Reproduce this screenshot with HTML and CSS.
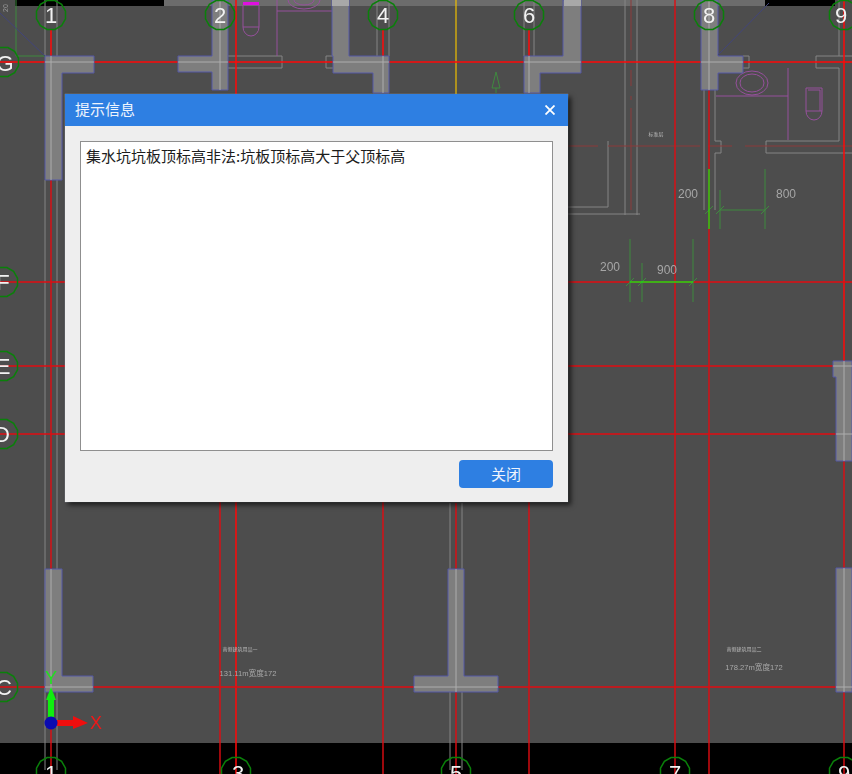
FILE: index.html
```html
<!DOCTYPE html>
<html lang="zh-CN">
<head>
<meta charset="utf-8">
<title>提示信息</title>
<link rel="stylesheet" href="styles.css">
</head>
<body>
<main class="stage">
  <svg class="canvas" width="852" height="774" viewBox="0 0 852 774" xmlns="http://www.w3.org/2000/svg">
    <defs>
      <polygon id="bubble" points="14.5,3.9 10.6,10.6 3.9,14.5 -3.9,14.5 -10.6,10.6 -14.5,3.9 -14.5,-3.9 -10.6,-10.6 -3.9,-14.5 3.9,-14.5 10.6,-10.6 14.5,-3.9"/>
    </defs>
    <rect class="bg" width="852" height="774"/>
    <rect class="black" x="0" y="743" width="852" height="31"/>
    <rect class="strip" x="164" y="0" width="601" height="6"/>
    <rect class="black" x="15" y="0" width="149" height="6"/>
    <rect class="black" x="765" y="0" width="70" height="6"/>

    <!-- thin building outlines -->
    <g class="outline">
      <path d="M45 0V56M57 0V56M45 180V770M57 180V770"/>
      <path d="M377 0V56M389 0V56M524 0V56M534 0V56"/>
      <path d="M625 0V215M637 0V215"/>
      <path d="M704 90V210M715 90V141H721V153H715V210"/>
      <path d="M839 0V56M839 68V141H766V153H852"/>
      <path d="M852 56H816V68H839"/>
      <path d="M450 503V770M462 503V770"/>
      <path d="M228 56H282V68H228"/>
      <path d="M333 56H326V68H333"/>
      <path d="M743 56H749V68H743"/>
      <path d="M568 214H640M568 207H608V141"/>
    </g>

    <!-- sanitary fittings -->
    <g class="fixture">
      <path d="M277 0V56M277 11H332"/>
      <path d="M243 5H259V27A8 9 0 0 1 243 27ZM243 27H259"/>
      <path d="M288 0A16 9 0 0 0 320 0"/>
      <path d="M294 0A10 5 0 0 0 314 0"/>
      <ellipse cx="752" cy="83" rx="16" ry="12"/>
      <ellipse cx="752" cy="83" rx="12" ry="9"/>
      <path d="M716 96H788M788 68V140"/>
      <path d="M806 88H822V111A8 9 0 0 1 806 111ZM806 111H822M808 90H820V111"/>
    </g>
    <rect class="fixture-bright" x="243" y="2" width="16" height="3"/>

    <!-- dashed centre lines -->
    <g class="dashed">
      <path d="M568 146H598M608 146H700M708 146H732M745 146H852"/>
      <path d="M631 0V50M631 70V86M631 96V100M631 108V210"/>
    </g>

    <!-- axis lines -->
    <path class="axis-yellow" d="M456 0V94"/>
    <g class="axis-bright">
      <path d="M0 62H852"/>
      <path d="M236 0V94M236 502V774"/>
      <path d="M220 30V56M51 30V56"/>
      <path d="M383 30V56M529 30V56"/>
      <path d="M844 0V361"/>
    </g>
    <g class="axis">
      <path d="M51 180V774M220 502V774M383 502V774M456 503V774M529 502V774"/>
      <path d="M675 0V774M709 90V774M844 461V568M844 692V774"/>
      <path d="M0 282H66M568 282H852M0 366H66M568 366H852M0 434H66M568 434H852M0 687H852"/>
    </g>

    <!-- walls -->
    <g class="wall">
      <path d="M45 56H94V73H62V180H45Z"/>
      <path d="M212 0H228V90H212V72H178V56H212Z"/>
      <path d="M332 0H349V56H389V93H373V73H333V56H332Z"/>
      <path d="M563 0H581V73H540V93H524V56H563Z"/>
      <path d="M701 0H718V56H743V73H718V90H701Z"/>
      <path d="M833 361H852V461H836V377H833Z"/>
      <path d="M836 568H852V692H836Z"/>
      <path d="M45 569H62V676H93V692H45Z"/>
      <path d="M448 569H464V676H498V692H414V676H448Z"/>
    </g>
    <rect class="wall-top" x="332" y="0" width="17" height="6"/>
    <rect class="wall-top" x="564" y="0" width="17" height="6"/>
    <g class="core">
      <path d="M45 62H94M51 56V180M178 62H228M220 0V90M333 62H389M383 56V93"/>
      <path d="M524 62H581M529 56V93M701 62H743M709 0V90"/>
      <path d="M833 366H852M844 361V461M836 434H852M844 568V692M836 687H852"/>
      <path d="M45 687H93M51 569V692M414 687H498M456 569V692"/>
    </g>

    <!-- dimensions -->
    <g class="dim">
      <path d="M720 190V229M765 169V229M720 210H765"/>
      <path d="M716 214L724 206M761 214L769 206M705 214L713 206"/>
      <path d="M630 239V302M642 263V302M693 239V302"/>
      <path d="M626 286L634 278M638 286L646 278M689 286L697 278"/>
      <path d="M16 0V56H45"/>
      <path d="M496 72L492 88H500ZM496 88V93"/>
    </g>
    <g class="dim-bright">
      <path d="M709 169V229M630 282H693"/>
    </g>
    <path class="diagonal" d="M0 13L45 56M718 55L769 3"/>

    <text class="dim-text" x="688" y="194">200</text>
    <text class="dim-text" x="786" y="194">800</text>
    <text class="dim-text" x="610" y="267">200</text>
    <text class="dim-text" x="667" y="270">900</text>
    <text class="room-text" x="656" y="133">标准层</text>
    <text class="room-text" x="240" y="648">南侧建筑用品一</text>
    <text class="area-text" x="248" y="673">131.11m宽度172</text>
    <text class="room-text" x="744" y="648">南侧建筑用品二</text>
    <text class="area-text" x="754" y="667">178.27m宽度172</text>
    <text class="mini-text" transform="translate(5 8) rotate(-90)">20</text>

    <!-- grid bubbles -->
    <g class="bubble">
      <use href="#bubble" x="51" y="15"/><use href="#bubble" x="220" y="15"/><use href="#bubble" x="383" y="15"/>
      <use href="#bubble" x="529" y="15"/><use href="#bubble" x="709" y="15"/><use href="#bubble" x="844" y="15"/>
      <use href="#bubble" x="4" y="62"/><use href="#bubble" x="3" y="282"/><use href="#bubble" x="3" y="366"/>
      <use href="#bubble" x="3" y="434"/><use href="#bubble" x="3" y="687"/>
      <use href="#bubble" x="51" y="772"/><use href="#bubble" x="236" y="772"/><use href="#bubble" x="456" y="772"/>
      <use href="#bubble" x="675" y="772"/><use href="#bubble" x="844" y="772"/>
    </g>
    <g class="grid-text">
      <text x="51" y="15">1</text><text x="220" y="15">2</text><text x="383" y="15">4</text>
      <text x="529" y="15">6</text><text x="709" y="15">8</text><text x="841" y="15">9</text>
      <text x="5" y="63">G</text><text x="3" y="282">F</text><text x="3" y="366">E</text>
      <text x="2" y="434">D</text><text x="4" y="687">C</text>
      <text x="51" y="773">1</text><text x="238" y="773">3</text><text x="456" y="773">5</text>
      <text x="675" y="773">7</text><text x="844" y="773">9</text>
    </g>

    <!-- UCS gizmo -->
    <path class="ucs-green" d="M48 717V700H46L51 687L56 700H54V717Z"/>
    <path class="ucs-red" d="M57 720H73V716L88 723L73 729V726H57Z"/>
    <circle class="ucs-blue" cx="51" cy="723" r="6.5"/>
    <text class="ucs-y" x="51" y="678">Y</text>
    <text class="ucs-x" x="96" y="723">X</text>
  </svg>

  <section class="dialog">
    <header class="dialog-title">
      <span class="dialog-heading">提示信息</span>
      <svg class="dialog-close" width="10" height="10" viewBox="0 0 10 10" xmlns="http://www.w3.org/2000/svg"><path d="M.5.5l9 9M9.5.5l-9 9"/></svg>
    </header>
    <div class="dialog-body">
      <div class="message">集水坑坑板顶标高非法:坑板顶标高大于父顶标高</div>
      <div class="actions"><button class="close-button" type="button">关闭</button></div>
    </div>
  </section>
</main>
</body>
</html>
```

FILE: styles.css
```css
html, body {
  margin: 0;
  padding: 0;
  background: #4d4d4d;
}

.stage {
  position: relative;
  width: 852px;
  height: 774px;
  overflow: hidden;
  font-family: "Noto Sans CJK SC", "Liberation Sans", sans-serif;
}

.canvas {
  display: block;
  filter: blur(0.35px);
}

.canvas text {
  text-anchor: middle;
  dominant-baseline: central;
}

.bg { fill: #4d4d4d; }
.black { fill: #000; }
.strip { fill: #6c6c6c; }

.outline, .fixture, .dashed, .axis, .axis-bright, .axis-yellow, .dim, .dim-bright, .diagonal, .core, .bubble {
  fill: none;
}

.outline { stroke: #858585; stroke-width: 1; }
.fixture { stroke: #96509c; stroke-width: 1; }
.fixture-bright { fill: #e010e0; }
.dashed { stroke: #8c3a3a; stroke-width: 1; }
.axis-yellow { stroke: #f0c000; stroke-width: 1.2; }
.axis-bright { stroke: #ff0808; stroke-width: 1.5; }
.axis { stroke: #e00c12; stroke-width: 1.4; }

.wall { fill: #7e7e7e; stroke: #5458a6; stroke-width: 1; }
.wall-top { fill: #a8a8a8; }
.core { stroke: #adadad; stroke-width: 1; }

.dim { stroke: #3f8a3f; stroke-width: 1; }
.dim-bright { stroke: #18e014; stroke-width: 1.4; }
.diagonal { stroke: #42457c; stroke-width: 1; }

.dim-text { fill: #a6a6a6; font: 12px "Liberation Sans", sans-serif; }
.room-text { fill: #b8b8b8; font: 5px "Noto Sans CJK SC", sans-serif; }
.area-text { fill: #a8a8a8; font: 7.6px "Liberation Sans", "Noto Sans CJK SC", sans-serif; }
.mini-text { fill: #9a9a9a; font: 7px "Liberation Sans", sans-serif; }

.bubble { stroke: #0a800a; stroke-width: 1.5; }
.grid-text { fill: #f2f2f2; font: 22px "Liberation Sans", sans-serif; }

.ucs-green { fill: #10ee10; }
.ucs-red { fill: #f00e0e; }
.ucs-blue { fill: #0b0bb0; }
.ucs-y { fill: #20e020; font: 18px "Liberation Sans", sans-serif; }
.ucs-x { fill: #f01818; font: 18px "Liberation Sans", sans-serif; }

.dialog {
  position: absolute;
  left: 65px;
  top: 94px;
  width: 503px;
  height: 408px;
  display: flex;
  flex-direction: column;
  background: #eeeeee;
  box-shadow: 3px 3px 5px rgba(0, 0, 0, 0.65), 0 0 1px rgba(200, 205, 225, 0.9);
}

.dialog-title {
  height: 32px;
  flex: none;
  box-sizing: border-box;
  display: flex;
  align-items: center;
  justify-content: space-between;
  padding: 0 13px 0 10px;
  background: #2e7fe2;
  color: #eef4fd;
  font-size: 15px;
}

.dialog-heading {
  line-height: 28px;
  margin-bottom: 2px;
}

.dialog-close path {
  fill: none;
  stroke: #fff;
  stroke-width: 1.8;
}

.dialog-body {
  flex: 1;
  display: flex;
  flex-direction: column;
  gap: 9px;
  padding: 15px 15px 14px;
}

.message {
  box-sizing: border-box;
  height: 310px;
  border: 1px solid #8f8f8f;
  background: #fff;
  padding: 4px 5px;
  color: #1c1c1c;
  font-size: 15px;
  line-height: 20px;
}

.actions {
  display: flex;
  justify-content: flex-end;
}

.close-button {
  width: 94px;
  height: 28px;
  padding: 0 0 1px;
  border: 0;
  border-radius: 4px;
  background: #2e7fe2;
  color: #eef4fd;
  font: 15px/22px "Noto Sans CJK SC", sans-serif;
}
```
